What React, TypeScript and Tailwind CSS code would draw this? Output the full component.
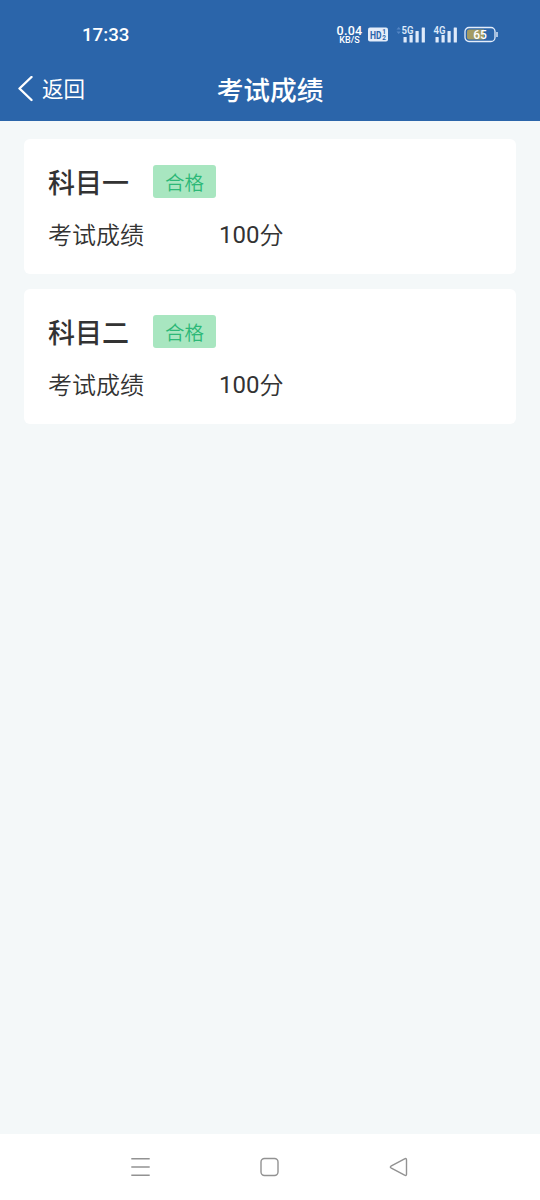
interface Subject {
    name: string;
    status: string;
    score: number;
}

const subjects: Subject[] = [
    { name: "科目一", status: "合格", score: 100 },
    { name: "科目二", status: "合格", score: 100 },
];

function SignalIcon({ label, idle }: { label: string; idle?: boolean }) {
    return (
        <svg width="31" height="20" viewBox="0 0 31 20" fill="#dfeafa">
            {idle && (
                <path d="M0.5 4.5L2.7 2L4.9 4.5ZM0.5 6.5L2.7 9L4.9 6.5Z" fill="#5486c4" />
            )}
            <text x="5.5" y="8.7" fontSize="10" fontWeight="600" textLength="12" lengthAdjust="spacingAndGlyphs">
                {label}
            </text>
            <rect x="7.5" y="12" width="3.2" height="5.5" rx="0.5" />
            <rect x="13.5" y="10" width="3.2" height="7.5" rx="0.5" />
            <rect x="19.5" y="6" width="3.2" height="11.5" rx="0.5" />
            <rect x="25.7" y="2.5" width="3.2" height="15" rx="0.5" />
        </svg>
    );
}

function StatusBar() {
    return (
        <div className="flex h-14 items-start pl-[82px] text-white">
            <span className="mt-[21px] w-[254px] text-[18.7px] leading-7 font-medium">17:33</span>
            <div className="mt-[25px] flex w-[27px] flex-col items-center whitespace-nowrap font-medium">
                <span className="text-[12.5px] leading-[11px] tracking-[0.3px]">0.04</span>
                <span className="text-[9px] leading-[9px]">KB/S</span>
            </div>
            <svg className="mt-[27px] ml-[5px]" width="20" height="15" viewBox="0 0 20 15">
                <rect y="0.5" width="20" height="14" rx="2" fill="#e4edfa" />
                <g fill="#2b65aa" fontWeight="700">
                    <text x="2" y="12" fontSize="11.5" textLength="11.5" lengthAdjust="spacingAndGlyphs">HD</text>
                    <text x="14.3" y="7.2" fontSize="6.5">1</text>
                    <text x="14.2" y="13.2" fontSize="6.5">2</text>
                </g>
            </svg>
            <div className="mt-[25px] ml-[8px] flex gap-px">
                <SignalIcon label="5G" idle />
                <SignalIcon label="4G" />
            </div>
            <svg className="mt-[26px] ml-[5px]" width="35" height="17" viewBox="0 0 35 17">
                <rect x="1" y="1.5" width="30" height="14" rx="4" fill="none" stroke="#e4edfa" strokeWidth="1.3" />
                <path d="M5 3.5H20V13.5H5Q3 13.5 3 11.5V5.5Q3 3.5 5 3.5Z" fill="#a39b63" />
                <path d="M33 6V11" stroke="#e4edfa" strokeWidth="1.4" />
                <text x="16" y="13" fontSize="12" fontWeight="500" textAnchor="middle" fill="#fff">65</text>
            </svg>
        </div>
    );
}

function Header() {
    return (
        <header className="relative flex h-[65px] items-center justify-center text-white">
            <div className="absolute top-[18px] left-[17px] flex items-center gap-[8px]">
                <svg width="17" height="28" viewBox="0 0 17 28" fill="none" stroke="currentColor" strokeWidth="2.4" strokeLinecap="round" strokeLinejoin="round">
                    <path d="M14.5 1L2.5 12.5L14.5 24" />
                </svg>
                <span className="text-[21.5px] leading-8">返回</span>
            </div>
            <h1 className="pt-[5px] text-[26.7px] leading-10 font-medium">考试成绩</h1>
        </header>
    );
}

function SubjectCard({ name, status, score }: Subject) {
    return (
        <section className="h-[135px] rounded-md bg-white px-6 pt-[26px] text-[#333333]">
            <div className="flex h-[33px] items-center">
                <h2 className="w-[105px] pt-[6px] text-[27px] leading-[33px] font-medium">{name}</h2>
                <span className="flex h-[33px] w-[63px] items-center justify-center rounded-[3px] bg-[#a8e6c0] pt-[4px] text-[19.5px] font-[350] text-[#2cb877]">
                    {status}
                </span>
            </div>
            <div className="mt-5 flex text-[24px] leading-9">
                <span className="w-[171px] font-[350]">考试成绩</span>
                <span className="-mt-px">{score}</span>
                <span className="font-[350]">分</span>
            </div>
        </section>
    );
}

function NavBar() {
    return (
        <nav className="flex h-[66px] items-center justify-between bg-white px-[129px] text-[#929292]">
            <svg width="22" height="22" viewBox="0 0 22 22" stroke="currentColor" strokeWidth="1.5">
                <path d="M2.3 2.7H20.7M2.3 11H20.7M2.3 19.2H20.7" />
            </svg>
            <svg width="22" height="22" viewBox="0 0 22 22" fill="none" stroke="currentColor" strokeWidth="1.4">
                <rect x="2" y="2.5" width="17" height="17" rx="3.5" />
            </svg>
            <svg width="22" height="22" viewBox="0 0 22 22" fill="none" stroke="currentColor" strokeWidth="1.4" strokeLinejoin="round">
                <path d="M1.9 10.2L15.6 2.8Q17.5 2 17.5 3.8V18.2Q17.5 20 15.6 19.2L1.9 11.8Q0.8 11 1.9 10.2Z" />
            </svg>
        </nav>
    );
}

export default function App() {
    return (
        <div className="flex h-screen flex-col bg-[#f4f8f9] font-['Roboto','Noto_Sans_CJK_SC',sans-serif]">
            <div className="bg-[#2b65aa]">
                <StatusBar />
                <Header />
            </div>
            <main className="flex flex-1 flex-col gap-[15px] px-6 pt-[18px]">
                {subjects.map((subject) => (
                    <SubjectCard key={subject.name} {...subject} />
                ))}
            </main>
            <NavBar />
        </div>
    );
}
